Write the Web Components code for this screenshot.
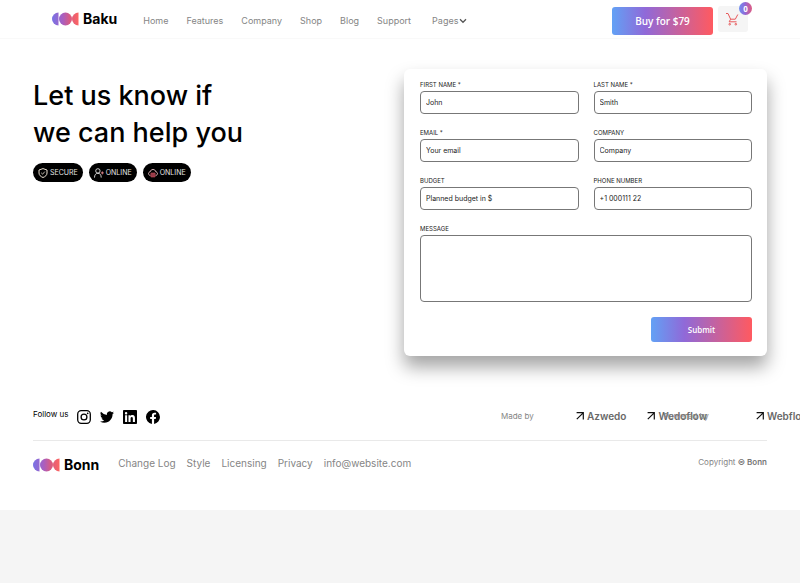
<!DOCTYPE html>
<html lang="en">
<head>
<meta charset="utf-8">
<meta name="viewport" content="width=device-width, initial-scale=1">
<title>Baku - Contact</title>
<style>
:root {
    --brand-gradient: linear-gradient(90deg, #62a1f5 0%, #9069d8 33%, #ff5a60 100%);
    --muted: #858585;
}
body {
    margin: 0;
    background: #f5f5f5;
    color: #000;
    font-family: Inter, "Liberation Sans", sans-serif;
    overflow-x: hidden;
}
</style>
</head>
<body>
<contact-page></contact-page>

<script>
function makeTemplate(html) {
    const template = document.createElement('template');
    template.innerHTML = html;
    return template;
}

class BaseElement extends HTMLElement {
    constructor() {
        super();
        this.attachShadow({mode: 'open'});
        this.shadowRoot.append(this.constructor.template.content.cloneNode(true));
    }
}

class BrandLogo extends BaseElement {
    static template = makeTemplate(`
<style>
:host { display: inline-block; }
a {
    display: flex;
    align-items: center;
    gap: 4px;
    color: #000;
    font-size: 14px;
    line-height: 18px;
    font-weight: 700;
    text-decoration: none;
}
</style>
<a href="#">
    <svg width="27" height="14" viewBox="0 0 27 14" aria-hidden="true">
        <defs>
            <linearGradient id="mark" gradientUnits="userSpaceOnUse" x1="0" x2="27" y1="0" y2="0">
                <stop offset="0" stop-color="#7773e6"/>
                <stop offset=".4" stop-color="#a95fc0"/>
                <stop offset=".65" stop-color="#d75b83"/>
                <stop offset="1" stop-color="#ff6560"/>
            </linearGradient>
        </defs>
        <g fill="url(#mark)">
            <path d="M6.500.5a6.500 6.500 0 0 0 0 13z"/>
            <path d="M26.500.5a6.500 6.500 0 0 0 0 13z"/>
            <circle cx="13.500" cy="7" r="6.500"/>
        </g>
    </svg>
    <slot></slot>
</a>
`);
}
customElements.define('brand-logo', BrandLogo);

class CartButton extends BaseElement {
    static template = makeTemplate(`
<style>
:host { display: block; position: relative; }
button {
    display: flex;
    align-items: center;
    justify-content: center;
    width: 30px;
    height: 26px;
    padding: 0 3px 0 0;
    border: 0;
    border-radius: 3px;
    background: #f5f5f5;
}
.count {
    position: absolute;
    top: -4px;
    right: -4px;
    width: 13px;
    border-radius: 50%;
    background: linear-gradient(90deg, #6d8ff0, #9069d8 45%, #e05a80);
    color: #fff;
    font: 700 8px/13px "Open Sans", sans-serif;
    text-align: center;
}
</style>
<button type="button" aria-label="Cart">
    <svg width="14" height="14" viewBox="0 0 14 14" fill="none" stroke="#e8585a" aria-hidden="true">
        <path d="M1 1.500h2l2.600 5.700h4.700l2.500-4.700M5.600 7.200l-1.400 2.600h7.300"/>
        <circle cx="4.700" cy="12.200" r=".8"/>
        <circle cx="10.800" cy="12.200" r=".8"/>
    </svg>
</button>
<span class="count"><slot></slot></span>
`);
}
customElements.define('cart-button', CartButton);

class SiteHeader extends BaseElement {
    static template = makeTemplate(`
<style>
:host { display: block; }
header {
    display: flex;
    align-items: center;
    height: 38px;
    padding: 0 52px;
    border-bottom: 1px solid #f9f9f9;
}
nav {
    display: flex;
    flex: 1;
    gap: 18px;
    margin-left: 26px;
    padding-top: 3px;
    font-size: 9px;
    line-height: 12px;
}
nav a {
    color: var(--muted);
    text-decoration: none;
    white-space: nowrap;
}
.pages {
    display: flex;
    align-items: center;
    gap: 1px;
    margin-left: 3px;
}
.buy {
    height: 28px;
    width: 101px;
    margin: 3px 5px 0 0;
    padding: 0;
    border: 0;
    border-radius: 3px;
    background: var(--brand-gradient);
    color: #fff;
    font: 600 10px/14px "Open Sans", sans-serif;
}
</style>
<header>
    <brand-logo>Baku</brand-logo>
    <nav>
        <a href="#">Home</a>
        <a href="#">Features</a>
        <a href="#">Company</a>
        <a href="#">Shop</a>
        <a href="#">Blog</a>
        <a href="#">Support</a>
        <a class="pages" href="#">Pages<svg width="8" height="6" viewBox="0 0 8 6" fill="none" stroke="#555" stroke-width="1.300" aria-hidden="true"><path d="M1 1.300 4 4.300l3-3"/></svg></a>
    </nav>
    <button class="buy" type="button">Buy for $79</button>
    <cart-button>0</cart-button>
</header>
`);
}
customElements.define('site-header', SiteHeader);

class TagPill extends BaseElement {
    static template = makeTemplate(`
<style>
:host {
    display: flex;
    align-items: center;
    gap: 2px;
    height: 19px;
    padding: 0 5px;
    border-radius: 10px;
    background: #000;
    color: #e4e4e4;
    font-size: 7px;
    line-height: 9px;
}
</style>
<slot name="icon"></slot>
<slot></slot>
`);
}
customElements.define('tag-pill', TagPill);

class FormField extends BaseElement {
    static template = makeTemplate(`
<style>
:host { display: block; }
label {
    display: block;
    margin-bottom: 2px;
    color: #222;
    font-size: 6px;
    line-height: 8px;
}
input, textarea {
    display: block;
    box-sizing: border-box;
    width: 100%;
    margin: 0;
    border: 1px solid #777;
    border-radius: 4px;
    background: #fff;
    color: #222;
    font-family: inherit;
    font-size: 7px;
    line-height: 10px;
}
input {
    height: 23px;
    padding: 0 5px;
}
textarea {
    height: 67px;
    padding: 5px;
    resize: none;
}
::placeholder {
    color: #222;
    opacity: 1;
}
</style>
<label for="control"></label>
`);

    connectedCallback() {
        if (this.shadowRoot.querySelector('#control')) return;
        const control = document.createElement(this.hasAttribute('multiline') ? 'textarea' : 'input');
        control.id = 'control';
        control.name = this.getAttribute('name');
        if (control.tagName === 'INPUT') {
            control.type = this.getAttribute('type') || 'text';
        }
        control.placeholder = this.getAttribute('placeholder') || '';
        this.shadowRoot.querySelector('label').textContent = this.getAttribute('label');
        this.shadowRoot.append(control);
    }
}
customElements.define('form-field', FormField);

class ContactForm extends BaseElement {
    static template = makeTemplate(`
<style>
:host { display: block; }
form {
    display: grid;
    grid-template-columns: 1fr 1fr;
    gap: 15px;
    padding: 12px 15px 14px 16px;
    border-radius: 6px;
    background: #fff;
    box-shadow: 0 11px 18px rgba(0, 0, 0, .36);
}
.wide { grid-column: 1 / -1; }
button {
    grid-column: 2;
    justify-self: end;
    width: 101px;
    height: 25px;
    padding: 0;
    border: 0;
    border-radius: 3px;
    background: var(--brand-gradient);
    color: #fff;
    font: 600 8px/12px "Open Sans", sans-serif;
}
</style>
<form>
    <form-field label="FIRST NAME *" name="first" placeholder="John"></form-field>
    <form-field label="LAST NAME *" name="last" placeholder="Smith"></form-field>
    <form-field label="EMAIL *" name="email" type="email" placeholder="Your email"></form-field>
    <form-field label="COMPANY" name="company" placeholder="Company"></form-field>
    <form-field label="BUDGET" name="budget" placeholder="Planned budget in $"></form-field>
    <form-field label="PHONE NUMBER" name="phone" type="tel" placeholder="+1 000111 22"></form-field>
    <form-field class="wide" label="MESSAGE" name="message" multiline></form-field>
    <button type="submit">Submit</button>
</form>
`);
}
customElements.define('contact-form', ContactForm);

class SocialLinks extends BaseElement {
    static template = makeTemplate(`
<style>
:host {
    display: flex;
    gap: 9px;
    font-size: 8px;
    line-height: 10px;
}
div { display: flex; gap: 9px; padding-top: 1px; }
a { display: block; height: 14px; color: #000; }
svg { display: block; width: 14px; height: 14px; fill: currentColor; }
</style>
<span>Follow us</span>
<div>
    <a href="#" aria-label="Instagram"><svg viewBox="0 0 24 24"><g fill="none" stroke="#000" stroke-width="2.200"><rect x="1.200" y="1.200" width="21.600" height="21.600" rx="6"/><circle cx="12" cy="12" r="5"/></g><circle cx="18.300" cy="5.700" r="1.500"/></svg></a>
    <a href="#" aria-label="Twitter"><svg viewBox="0 0 24 24"><path d="M24 4.600a10 10 0 0 1-2.800.8 4.900 4.900 0 0 0 2.200-2.700c-1 .6-2 1-3.100 1.200a4.900 4.900 0 0 0-8.400 4.500A14 14 0 0 1 1.700 3.100a4.900 4.900 0 0 0 1.500 6.600 4.900 4.900 0 0 1-2.200-.6 4.900 4.900 0 0 0 3.900 4.900 5 5 0 0 1-2.200.1 4.900 4.900 0 0 0 4.600 3.400A9.900 9.900 0 0 1 0 19.500 14 14 0 0 0 7.500 21.700c9.100 0 14.300-7.700 14-14.600A10 10 0 0 0 24 4.600z"/></svg></a>
    <a href="#" aria-label="LinkedIn"><svg viewBox="0 0 24 24"><path fill-rule="evenodd" d="M1.800 0h20.400C23.200 0 24 .8 24 1.700v20.600c0 .9-.8 1.700-1.800 1.700H1.800C.8 24 0 23.200 0 22.300V1.700C0 .8.8 0 1.800 0zM3.600 9h3.500v11.400H3.600zM5.300 3.300a2.100 2.100 0 1 1 0 4.200 2.100 2.100 0 0 1 0-4.200zM9.400 9h3.400v1.600c.5-.9 1.600-1.900 3.400-1.900 3.600 0 4.300 2.400 4.300 5.500v6.200h-3.600v-5.500c0-1.400 0-3-1.800-3s-2.100 1.400-2.100 2.900v5.600H9.400z"/></svg></a>
    <a href="#" aria-label="Facebook"><svg viewBox="0 0 24 24"><path d="M24 12a12 12 0 1 0-13.900 11.900v-8.400h-3V12h3V9.400c0-3 1.800-4.700 4.500-4.700 1.300 0 2.700.2 2.700.2v3h-1.500c-1.500 0-2 .9-2 1.900V12h3.400l-.5 3.500h-2.800v8.400A12 12 0 0 0 24 12z"/></svg></a>
</div>
`);
}
customElements.define('social-links', SocialLinks);

class CreditLink extends BaseElement {
    static template = makeTemplate(`
<style>
:host { display: block; }
a {
    display: flex;
    align-items: center;
    gap: 3px;
    color: #686868;
    font-size: 10px;
    line-height: 12px;
    font-weight: 600;
    text-decoration: none;
}
svg { flex: none; }
</style>
<a href="#">
    <svg width="8" height="8" viewBox="0 0 8 8" fill="none" stroke="#111" stroke-width="1.200" aria-hidden="true"><path d="M.6.7h6.700v6.700M7.200.8.8 7.200"/></svg>
    <slot></slot>
</a>
`);
}
customElements.define('credit-link', CreditLink);

class SiteFooter extends BaseElement {
    static template = makeTemplate(`
<style>
:host { display: block; }
.top {
    display: grid;
    grid-template-columns: 1fr 266px;
    padding-bottom: 16px;
    border-bottom: 1px solid #e9e9e9;
}
.credits {
    display: grid;
    grid-template-columns: 75px 88px 92px 60px;
    align-items: center;
    height: 14px;
    color: var(--muted);
    font-size: 8px;
    line-height: 10px;
    white-space: nowrap;
}
.makers { display: flex; gap: 21px; }
.bottom {
    display: flex;
    align-items: flex-start;
    padding-top: 15px;
}
nav {
    display: flex;
    flex: 1;
    gap: 11px;
    margin-left: 19px;
    font-size: 10px;
    line-height: 14px;
}
nav a { color: var(--muted); text-decoration: none; }
small {
    color: var(--muted);
    font-size: 8px;
    line-height: 12px;
}
b { color: #777; font-weight: 600; }
</style>
<footer>
    <div class="top">
        <social-links></social-links>
        <div class="credits">
            <span>Made by</span>
            <div class="makers">
                <credit-link>Azwedo</credit-link>
                <credit-link>Wedoflow</credit-link>
            </div>
            <span>Powered by</span>
            <credit-link>Webflow</credit-link>
        </div>
    </div>
    <div class="bottom">
        <brand-logo>Bonn</brand-logo>
        <nav>
            <a href="#">Change Log</a>
            <a href="#">Style</a>
            <a href="#">Licensing</a>
            <a href="#">Privacy</a>
            <a href="#">info@website.com</a>
        </nav>
        <small>Copyright <b>© Bonn</b></small>
    </div>
</footer>
`);
}
customElements.define('site-footer', SiteFooter);

class ContactPage extends BaseElement {
    static template = makeTemplate(`
<style>
:host {
    display: block;
    padding-bottom: 36px;
    background: #fff;
    overflow: hidden;
}
main {
    display: grid;
    grid-template-columns: 1fr 363px;
    align-items: start;
    padding: 30px 33px 53px;
}
h1 {
    margin: 8px 0 12px;
    font-size: 27px;
    line-height: 37px;
    font-weight: 500;
}
.tags { display: flex; gap: 6px; }
site-footer { padding: 0 33px; }
</style>
<site-header></site-header>
<main>
    <section>
        <h1>Let us know if<br>we can help you</h1>
        <div class="tags">
            <tag-pill>
                <svg slot="icon" width="10" height="10" viewBox="0 0 10 10" fill="none" stroke="#e9dfd0" aria-hidden="true"><path d="M5 .6 9 2v3c0 2.200-1.700 3.600-4 4.500C2.700 8.600 1 7.200 1 5V2z"/><path d="m3.200 4.800 1.400 1.400 2.200-2.600" stroke-width=".8"/></svg>
                SECURE
            </tag-pill>
            <tag-pill>
                <svg slot="icon" width="10" height="10" viewBox="0 0 10 10" fill="none" stroke="#e4e4e4" stroke-width=".9" aria-hidden="true"><circle cx="3.900" cy="2.900" r="2.200"/><path d="M.5 9.600c0-2.800 1.300-4.300 3.400-4.300s3.300 1.500 3.300 4.300"/><path d="M8.300 3.400v3M6.800 4.900h3" stroke="#e88a92"/></svg>
                ONLINE
            </tag-pill>
            <tag-pill>
                <svg slot="icon" width="10" height="10" viewBox="0 0 10 10" fill="none" stroke="#f0c6cb" stroke-width=".9" aria-hidden="true"><path d="M2.300 7.500C1.200 7.300.5 6.500.5 5.600s.7-1.700 1.700-1.800C2.500 2.300 3.600 1.500 5 1.500s2.500.8 2.800 2.300c1 .1 1.700.9 1.700 1.800s-.7 1.700-1.800 1.900"/><path d="M3 5.200h4v3.600H3zM5 5.200v3.600M3 7h4" stroke="#d95567"/></svg>
                ONLINE
            </tag-pill>
        </div>
    </section>
    <contact-form></contact-form>
</main>
<site-footer></site-footer>
`);
}
customElements.define('contact-page', ContactPage);
</script>
</body>
</html>
